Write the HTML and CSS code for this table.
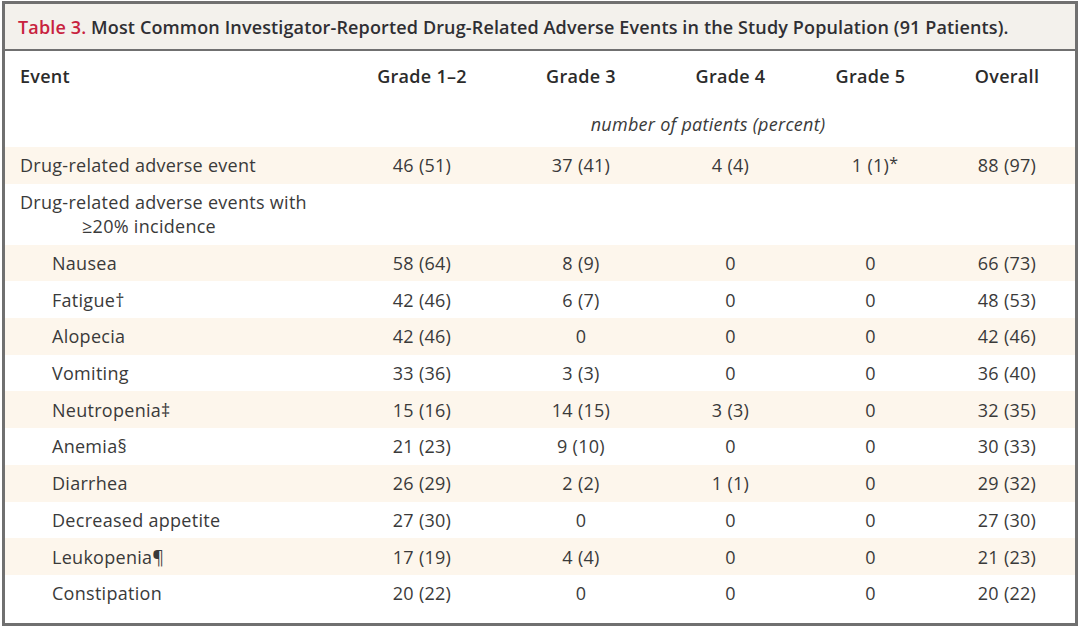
FILE: index.html
```html
<!DOCTYPE html>
<html>
<head>
<meta charset="utf-8">
<link rel="stylesheet" href="styles.css">
</head>
<body>
<div class="frame">
  <div class="title"><span class="tnum">Table 3.</span> Most Common Investigator-Reported Drug-Related Adverse Events in the Study Population (91 Patients).</div>
  <table class="tbl">
    <colgroup>
      <col class="c-ev"><col class="c-1"><col class="c-2"><col class="c-3"><col class="c-4"><col class="c-5">
    </colgroup>
    <thead>
      <tr class="hdr">
        <th class="ev">Event</th><th>Grade 1–2</th><th>Grade 3</th><th>Grade 4</th><th>Grade 5</th><th>Overall</th>
      </tr>
      <tr class="units">
        <td></td><td colspan="5" class="unit-txt">number of patients (percent)</td>
      </tr>
    </thead>
    <tbody>
      <tr class="row stripe"><td class="ev">Drug-related adverse event</td><td>46 (51)</td><td>37 (41)</td><td>4 (4)</td><td><span class="fn-wrap">1 (1)<span class="fn">*</span></span></td><td>88 (97)</td></tr>
      <tr class="row two"><td class="ev">Drug-related adverse events with<br><span class="cont">≥20% incidence</span></td><td></td><td></td><td></td><td></td><td></td></tr>
      <tr class="row stripe"><td class="ev ind">Nausea</td><td>58 (64)</td><td>8 (9)</td><td>0</td><td>0</td><td>66 (73)</td></tr>
      <tr class="row"><td class="ev ind">Fatigue†</td><td>42 (46)</td><td>6 (7)</td><td>0</td><td>0</td><td>48 (53)</td></tr>
      <tr class="row stripe"><td class="ev ind">Alopecia</td><td>42 (46)</td><td>0</td><td>0</td><td>0</td><td>42 (46)</td></tr>
      <tr class="row"><td class="ev ind">Vomiting</td><td>33 (36)</td><td>3 (3)</td><td>0</td><td>0</td><td>36 (40)</td></tr>
      <tr class="row stripe"><td class="ev ind">Neutropenia‡</td><td>15 (16)</td><td>14 (15)</td><td>3 (3)</td><td>0</td><td>32 (35)</td></tr>
      <tr class="row"><td class="ev ind">Anemia§</td><td>21 (23)</td><td>9 (10)</td><td>0</td><td>0</td><td>30 (33)</td></tr>
      <tr class="row stripe"><td class="ev ind">Diarrhea</td><td>26 (29)</td><td>2 (2)</td><td>1 (1)</td><td>0</td><td>29 (32)</td></tr>
      <tr class="row"><td class="ev ind">Decreased appetite</td><td>27 (30)</td><td>0</td><td>0</td><td>0</td><td>27 (30)</td></tr>
      <tr class="row stripe"><td class="ev ind">Leukopenia¶</td><td>17 (19)</td><td>4 (4)</td><td>0</td><td>0</td><td>21 (23)</td></tr>
      <tr class="row last"><td class="ev ind">Constipation</td><td>20 (22)</td><td>0</td><td>0</td><td>0</td><td>20 (22)</td></tr>
    </tbody>
  </table>
</div>
</body>
</html>
```

FILE: styles.css
```css
html, body {
  margin: 0;
  padding: 0;
  background: #ffffff;
}
body {
  font-family: "Open Sans", "Noto Sans", sans-serif;
  color: #3a3a3a;
}
.frame {
  box-sizing: border-box;
  width: 1076px;
  height: 625px;
  margin: 1px 0 0 2px;
  border: 3px solid #707070;
  background: #ffffff;
}
.title {
  box-sizing: border-box;
  height: 47px;
  background: #f3f1ec;
  border-bottom: 2px solid #707070;
  padding: 10px 0 0 13px;
  font-size: 18px;
  font-weight: 600;
  letter-spacing: 0.14px;
  line-height: 26px;
  color: #2f2f33;
  white-space: nowrap;
}
.tnum {
  color: #c8223e;
}
.tbl {
  width: 1070px;
  table-layout: fixed;
  border-collapse: collapse;
  font-size: 18px;
  letter-spacing: 0.28px;
}
.c-ev { width: 336px; }
.c-1 { width: 162px; }
.c-2 { width: 156px; }
.c-3 { width: 143px; }
.c-4 { width: 137px; }
.c-5 { width: 136px; }
.tbl th, .tbl td {
  padding: 0;
  text-align: center;
  line-height: 24px;
  vertical-align: middle;
}
.tbl .ev {
  text-align: left;
  padding-left: 15px;
}
.tbl .ind {
  padding-left: 47px;
}
.hdr th {
  height: 50px;
  font-weight: 600;
  color: #2b2b2b;
}
.units td {
  height: 46px;
}
.unit-txt {
  font-style: italic;
}
.row td {
  height: 36.7px;
}
.row.two td {
  height: 61px;
}
.stripe td {
  background: #fdf6ec;
}
.cont {
  padding-left: 62px;
}
.fn-wrap {
  position: relative;
}
.fn {
  position: absolute;
  left: 100%;
  top: -2px;
  font-size: 16px;
}
```
